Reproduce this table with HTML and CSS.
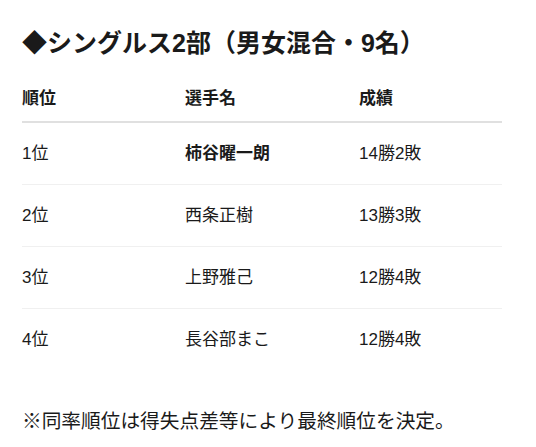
FILE: index.html
```html
<!DOCTYPE html>
<html lang="ja">
<head>
<meta charset="utf-8">
<link rel="stylesheet" href="styles.css">
</head>
<body>
<div class="page">
  <h2 class="title">◆シングルス2部（男女混合・9名）</h2>
  <table class="results">
    <thead>
      <tr><th class="c1">順位</th><th class="c2">選手名</th><th class="c3">成績</th></tr>
    </thead>
    <tbody>
      <tr><td>1位</td><td class="win">柿谷曜一朗</td><td>14勝2敗</td></tr>
      <tr><td>2位</td><td>西条正樹</td><td>13勝3敗</td></tr>
      <tr><td>3位</td><td>上野雅己</td><td>12勝4敗</td></tr>
      <tr><td>4位</td><td>長谷部まこ</td><td>12勝4敗</td></tr>
    </tbody>
  </table>
  <p class="note">※同率順位は得失点差等により最終順位を決定。</p>
</div>
</body>
</html>
```
FILE: styles.css
```css
* { box-sizing: border-box; }
html, body { margin: 0; padding: 0; background: #fff; }
body {
  font-family: "Liberation Sans", "Noto Sans CJK JP", sans-serif;
  color: #1a1a1a;
}
.page { padding: 25px 34px 0 22px; }
.title {
  margin: 0;
  font-size: 25px;
  line-height: 36px;
  font-weight: 700;
}
.results {
  margin-top: 25px;
  width: 480px;
  border-collapse: collapse;
  font-size: 17px;
}
.results th {
  text-align: left;
  font-weight: 700;
  line-height: 26px;
  padding: 0 0 9px 0;
  border-bottom: 2px solid #e0e0e0;
}
.c1 { width: 163px; }
.c2 { width: 174px; }
.results td {
  line-height: 26px;
  padding: 18px 0 17px 0;
  border-bottom: 1px solid #f0f0f0;
}
.results tbody tr:last-child td { border-bottom: none; }
.win { font-weight: 700; }
.note {
  margin: 37px 0 0 0;
  font-size: 19.7px;
  line-height: 28px;
}
```
